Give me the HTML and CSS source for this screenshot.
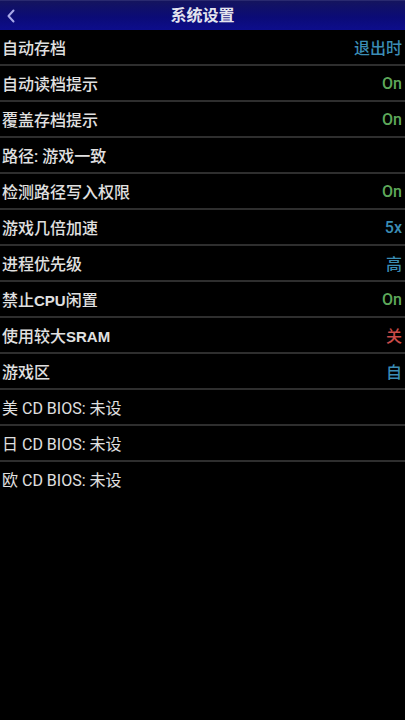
FILE: index.html
```html
<!DOCTYPE html>
<html lang="zh-CN">
<head>
<meta charset="utf-8">
<title>系统设置</title>
<link rel="stylesheet" href="styles.css">
</head>
<body>
<header class="topbar">
  <span class="back"><svg width="10" height="14" viewBox="0 0 10 14"><path d="M7.5 1.5 L2.5 7 L7.5 12.5" fill="none" stroke="#a8a8e8" stroke-width="2" stroke-linecap="round" stroke-linejoin="round"/></svg></span>
  <h1 class="title">系统设置</h1>
</header>
<ul class="list">
  <li class="row"><span class="label">自动存档</span><span class="val blue">退出时</span></li>
  <li class="row"><span class="label">自动读档提示</span><span class="val green">On</span></li>
  <li class="row"><span class="label">覆盖存档提示</span><span class="val green">On</span></li>
  <li class="row"><span class="label">路径: 游戏一致</span></li>
  <li class="row"><span class="label">检测路径写入权限</span><span class="val green">On</span></li>
  <li class="row"><span class="label">游戏几倍加速</span><span class="val blue">5x</span></li>
  <li class="row"><span class="label">进程优先级</span><span class="val blue">高</span></li>
  <li class="row"><span class="label">禁止<span class="latin">CPU</span>闲置</span><span class="val green">On</span></li>
  <li class="row"><span class="label">使用较大<span class="latin">SRAM</span></span><span class="val red">关</span></li>
  <li class="row"><span class="label">游戏区</span><span class="val blue">自</span></li>
  <li class="row bios"><span class="label">美 CD BIOS: 未设</span></li>
  <li class="row bios"><span class="label">日 CD BIOS: 未设</span></li>
  <li class="row bios last"><span class="label">欧 CD BIOS: 未设</span></li>
</ul>
</body>
</html>
```
FILE: styles.css
```css
html, body {
  margin: 0;
  padding: 0;
  background: #000;
}
body {
  width: 405px;
  height: 720px;
  font-family: Roboto, "Noto Sans CJK SC", sans-serif;
  color: #e2e2e2;
  overflow: hidden;
}
.topbar {
  position: relative;
  height: 30px;
  display: flex;
  align-items: center;
  justify-content: center;
  background: linear-gradient(180deg, #14145e 0%, #0b0b76 55%, #0d0d8c 100%);
  border-top: 1px solid #2a2a70;
  box-sizing: border-box;
}
.back {
  position: absolute;
  left: 6px;
  top: 8px;
  display: flex;
}
.title {
  margin: 0;
  font-size: 16px;
  font-weight: bold;
  color: #e4e4ee;
  line-height: 30px;
}
.list {
  list-style: none;
  margin: 0;
  padding: 0;
}
.row {
  height: 34px;
  display: flex;
  align-items: center;
  justify-content: space-between;
  padding: 0 3px 0 2px;
  border-bottom: 2px solid #2e2e2e;
  font-size: 16px;
  font-weight: 500;
}
.row.bios {
  font-weight: 400;
}
.row.last {
  border-bottom: none;
}
.label {
  color: #e0e0e0;
}
.latin {
  font-family: "Liberation Sans", Arial, sans-serif;
  font-weight: bold;
  font-size: 15px;
}
.val {
  font-size: 16px;
}
.blue { color: #3b8db5; }
.green { color: #5ea85a; }
.red { color: #c94a48; }
```
